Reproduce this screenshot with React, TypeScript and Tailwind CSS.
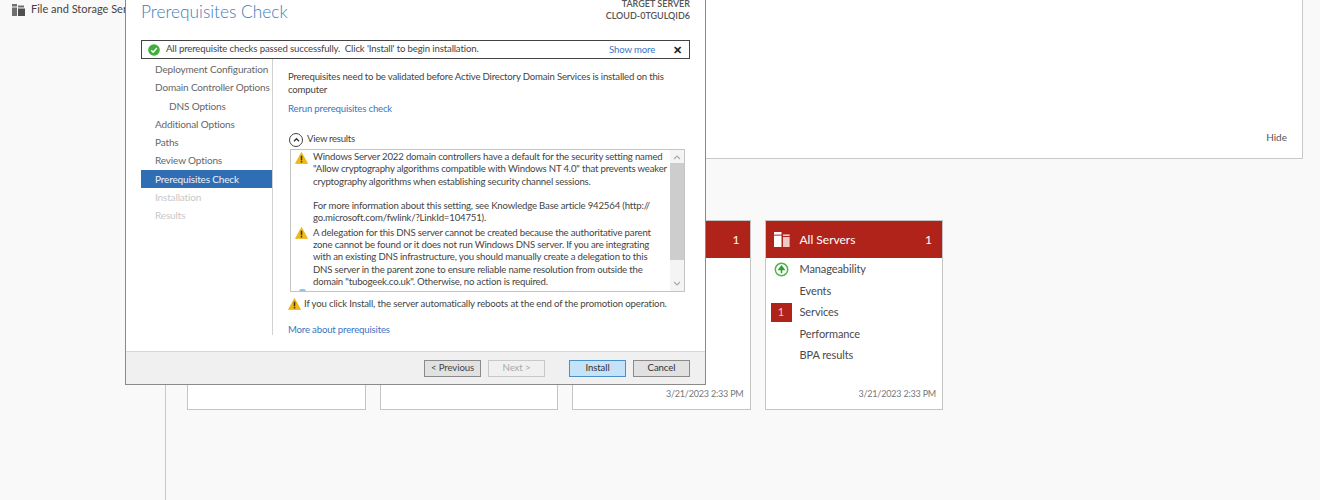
import React from "react";

const font = { fontFamily: 'Lato, "Noto Sans", sans-serif' };

function Warn({ className = "" }: { className?: string }) {
  return (
    <svg viewBox="0 0 14 13" className={`h-[12px] w-[13px] shrink-0 ${className}`}>
      <path d="M7 .5 13.6 12.5H.4Z" fill="#f2b90f" stroke="#e0a800" strokeWidth=".6" strokeLinejoin="round" />
      <rect x="6.2" y="4" width="1.6" height="5" fill="#3a3320" />
      <rect x="6.2" y="9.8" width="1.6" height="1.6" fill="#3a3320" />
    </svg>
  );
}

function ServersIcon() {
  return (
    <svg viewBox="0 0 16 15" className="h-[15px] w-[16px]">
      <rect x="0" y="0" width="7.5" height="2.6" fill="#fff" />
      <rect x="0" y="3.6" width="7.5" height="11.4" fill="#fff" />
      <rect x="9" y="2.4" width="6.6" height="1.6" fill="#f0c8c4" />
      <rect x="9" y="5" width="6.6" height="10" fill="#f0c8c4" />
    </svg>
  );
}

const nav = [
  { t: "Deployment Configuration", c: "text-[#666]" },
  { t: "Domain Controller Options", c: "text-[#666]" },
  { t: "DNS Options", c: "text-[#666] pl-[28px]" },
  { t: "Additional Options", c: "text-[#666]" },
  { t: "Paths", c: "text-[#666]" },
  { t: "Review Options", c: "text-[#666]" },
  { t: "Prerequisites Check", c: "bg-[#2f6db5] text-[#f0f4fa]" },
  { t: "Installation", c: "text-[#c8c8c8]" },
  { t: "Results", c: "text-[#c8c8c8]" },
];

function Card({ title = "", count = false, date = false, rows = false }: { title?: string; count?: boolean; date?: boolean; rows?: boolean }) {
  const names = ["Manageability", "Events", "Services", "Performance", "BPA results"];
  return (
    <div className="flex h-[190px] w-[178.5px] shrink-0 flex-col border border-[#c4c4c4] bg-white">
      <div className="flex h-[37px] shrink-0 items-center bg-[#b0231a] pl-[8px] pr-[10px] text-white">
        {title && <ServersIcon />}
        <span className="ml-[10px] flex-1 text-[12px]">{title}</span>
        {count && <span className="text-[12px]">1</span>}
      </div>
      {rows && (
        <div className="mt-[1px] flex flex-col">
          {names.map((r) => (
            <div key={r} className="relative flex h-[21.4px] items-center pl-[34px] text-[11px] tracking-[-0.1px] text-[#4a4a4a]">
              {r === "Manageability" && (
                <svg viewBox="0 0 16 16" className="absolute left-[8px] top-[3px] h-[15px] w-[15px]">
                  <circle cx="8" cy="8" r="6.6" fill="none" stroke="#4cb848" strokeWidth="1.6" />
                  <path d="M8 12V6M5.4 8 8 4.6 10.6 8Z" fill="#2f9e33" stroke="#2f9e33" strokeWidth="1.6" />
                </svg>
              )}
              {r === "Services" && (
                <span className="absolute left-[5px] top-[1px] flex h-[19px] w-[21px] items-center justify-center bg-[#b0231a] text-[11px] text-[#f4c8c4]">
                  1
                </span>
              )}
              {r}
            </div>
          ))}
        </div>
      )}
      {date && <div className="mt-auto pb-[9px] pr-[6px] text-right text-[9px] tracking-[-0.2px] text-[#777]">3/21/2023 2:33 PM</div>}
    </div>
  );
}

function Btn({ children, className = "" }: { children: React.ReactNode; className?: string }) {
  return (
    <div className={`flex h-[17px] w-[57px] items-center justify-center border text-[9.6px] tracking-[-0.1px] ${className}`}>{children}</div>
  );
}

export default function App() {
  return (
    <div className="relative flex h-[500px] w-[1320px] overflow-hidden bg-[#f9f9f9]" style={font}>
      <aside className="h-full w-[166px] shrink-0 border-r border-[#c8c8c8] pl-[12px]">
        <div className="flex h-[19px] items-center">
          <svg viewBox="0 0 13 12" className="h-[12px] w-[13px]">
            <path d="M0 0h5v2.5H0ZM0 3.5h5V12H0ZM6 1.5h6v2H6Z" fill="#6f6f6f" />
            <rect x="6" y="4.5" width="7" height="7.5" fill="#4f4f4f" />
          </svg>
          <span className="ml-[6px] w-[94px] overflow-hidden whitespace-nowrap text-[11px] text-[#444]">File and Storage Services</span>
        </div>
      </aside>

      <main className="flex-1 pl-[21px] pr-[17px]">
        <div className="flex h-[159px] items-end justify-end border-b border-r border-[#c8c8c8] bg-white pb-[13px] pr-[15px] text-[10px] text-[#555]">
          Hide
        </div>
        <div className="mt-[61px] flex gap-[14px]">
          <Card />
          <Card />
          <Card count date />
          <Card title="All Servers" count date rows />
        </div>
      </main>

      {/* Wizard window */}
      <div className="absolute left-[125px] top-0 flex h-[385px] w-[581px] flex-col border border-t-0 border-[#8a8a8a] bg-white text-[#444]">
        <div className="flex h-[40px] shrink-0 items-start justify-between pl-[15px] pr-[15px]">
          <div className="mt-[-2px] text-[17.3px] leading-[28px] font-light text-[#3c7cb8]">Prerequisites Check</div>
          <div className="text-right text-[9px] font-semibold leading-[12px] text-[#555]">
            <div className="mt-[-2px]">TARGET SERVER</div>
            <div>CLOUD-0TGULQID6</div>
          </div>
        </div>
        <div className="mx-[15px] flex h-[19px] shrink-0 items-center border border-[#444] pl-[6px] pr-[7px] text-[9.6px] tracking-[-0.14px] text-[#444]">
          <svg viewBox="0 0 12 12" className="h-[12px] w-[12px]">
            <circle cx="6" cy="6" r="5.8" fill="#3fae3a" />
            <path d="M3.2 6.2 5.2 8.2 8.9 4" fill="none" stroke="#fff" strokeWidth="1.5" />
          </svg>
          <span className="ml-[6px] flex-1">All prerequisite checks passed successfully.&nbsp; Click 'Install' to begin installation.</span>
          <span className="mt-[1px] text-[#3a75c4]">Show more</span>
          <span className="ml-[18px] text-[11px] font-bold leading-none text-[#222]">✕</span>
        </div>

        <div className="flex min-h-0 flex-1 items-start">
          <nav className="ml-[15px] w-[131px] pt-[1.5px]">
            {nav.map((n) => (
              <div key={n.t} className={`flex h-[18.25px] items-center whitespace-nowrap pl-[14px] text-[10px] tracking-[-0.15px] ${n.c}`}>
                {n.t}
              </div>
            ))}
          </nav>
          <div className="h-[276px] flex-1 border-l border-[#d0d0d0] pl-[15px] text-[9.6px] tracking-[-0.18px] text-[#444]">
            <div className="pt-[12px] leading-[12.5px]">
              <div className="whitespace-nowrap">Prerequisites need to be validated before Active Directory Domain Services is installed on this</div>
              <div>computer</div>
            </div>
            <div className="mt-[4.5px] leading-[15px] text-[#3a75c4]">Rerun prerequisites check</div>
            <div className="mt-[16.5px] flex h-[15px] items-center">
              <span className="ml-[1px] flex h-[14px] w-[14px] items-center justify-center rounded-full border border-[#444]">
                <svg viewBox="0 0 8 6" className="h-[5px] w-[7px]">
                  <path d="M1 5 4 2l3 3" fill="none" stroke="#333" strokeWidth="1.6" />
                </svg>
              </span>
              <span className="ml-[4px] tracking-[-0.3px]">View results</span>
            </div>
            <div className="ml-[2px] mt-[2px] flex h-[143px] w-[395px] overflow-hidden border border-[#c4c4c4]">
              <div className="relative flex-1 overflow-hidden pl-[4px] pt-[2px] leading-[12.3px]">
                <div className="flex">
                  <Warn />
                  <div className="ml-[5px] mt-[-1px] whitespace-nowrap">
                    <div>Windows Server 2022 domain controllers have a default for the security setting named</div>
                    <div>"Allow cryptography algorithms compatible with Windows NT 4.0" that prevents weaker</div>
                    <div>cryptography algorithms when establishing security channel sessions.</div>
                    <div className="mt-[12.3px]">For more information about this setting, see Knowledge Base article 942564 (http://</div>
                    <div>go.microsoft.com/fwlink/?LinkId=104751).</div>
                  </div>
                </div>
                <div className="mt-[2px] flex">
                  <Warn />
                  <div className="ml-[5px] whitespace-nowrap">
                    <div>A delegation for this DNS server cannot be created because the authoritative parent</div>
                    <div>zone cannot be found or it does not run Windows DNS server. If you are integrating</div>
                    <div>with an existing DNS infrastructure, you should manually create a delegation to this</div>
                    <div>DNS server in the parent zone to ensure reliable name resolution from outside the</div>
                    <div>domain "tubogeek.co.uk". Otherwise, no action is required.</div>
                  </div>
                </div>
                <div className="ml-[4px] mt-[1px] h-[5px] w-[7px] rounded-full bg-[#8fc3ea]" />
              </div>
              <div className="flex w-[14px] shrink-0 flex-col items-center bg-[#f4f4f4]">
                <svg viewBox="0 0 8 5" className="mt-[5px] h-[5px] w-[8px]">
                  <path d="M1 4 4 1l3 3" fill="none" stroke="#a8a8a8" strokeWidth="1.1" />
                </svg>
                <div className="mt-[3px] h-[97px] w-full bg-[#cdcdcd]" />
                <svg viewBox="0 0 8 5" className="mt-auto mb-[5px] h-[5px] w-[8px]">
                  <path d="M1 1l3 3 3-3" fill="none" stroke="#a8a8a8" strokeWidth="1.1" />
                </svg>
              </div>
            </div>
            <div className="mt-[4.5px] flex items-center">
              <Warn />
              <span className="ml-[3px] whitespace-nowrap tracking-[-0.14px]">If you click Install, the server automatically reboots at the end of the promotion operation.</span>
            </div>
            <div className="mt-[13px] leading-[12px] text-[#3a75c4]">More about prerequisites</div>
          </div>
        </div>

        <div className="flex h-[33px] shrink-0 items-center justify-end gap-[7px] border-t border-[#d8d8d8] bg-[#f0f0f0] pr-[15px]">
          <Btn className="border-[#8a8a8a] bg-[#e1e1e1] text-[#444]">&lt; Previous</Btn>
          <Btn className="border-[#c8c8c8] bg-[#f0f0f0] text-[#a8a8a8]">Next &gt;</Btn>
          <Btn className="ml-[17px] border-[#4a90c8] bg-[#c4e2f8] text-[#333]">Install</Btn>
          <Btn className="border-[#8a8a8a] bg-[#e1e1e1] text-[#333]">Cancel</Btn>
        </div>
      </div>
    </div>
  );
}
